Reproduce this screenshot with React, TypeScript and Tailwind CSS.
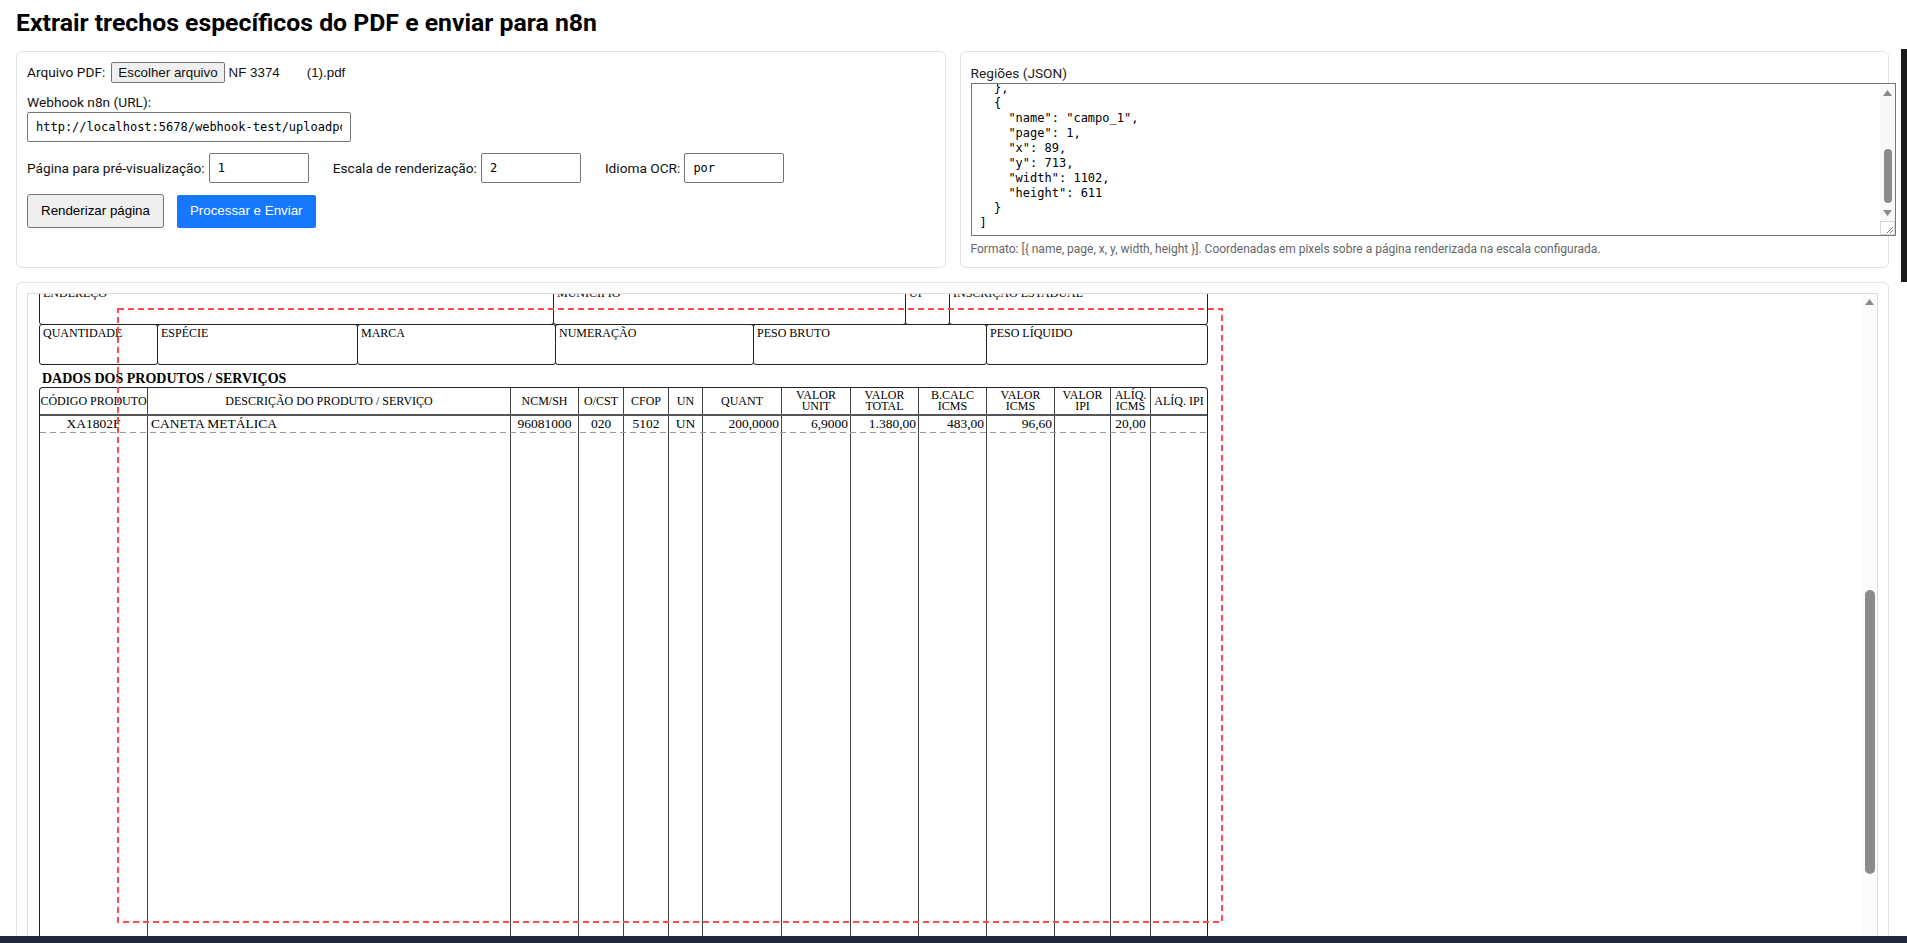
import React from 'react'

// only the part of the textarea that is scrolled into view
const jsonLines = [
  '  },',
  '  {',
  '    "name": "campo_1",',
  '    "page": 1,',
  '    "x": 89,',
  '    "y": 713,',
  '    "width": 1102,',
  '    "height": 611',
  '  }',
  ']',
]

// widths of the table columns, in px (without the outer borders)
const cols = [
  { w: 'w-[108px]', head: ['CÓDIGO PRODUTO'], value: 'XA1802F', align: 'justify-center' },
  { w: 'w-[363px]', head: ['DESCRIÇÃO DO PRODUTO / SERVIÇO'], value: 'CANETA METÁLICA', align: 'justify-start pl-[3px]' },
  { w: 'w-[68px]', head: ['NCM/SH'], value: '96081000', align: 'justify-center' },
  { w: 'w-[45px]', head: ['O/CST'], value: '020', align: 'justify-center' },
  { w: 'w-[45px]', head: ['CFOP'], value: '5102', align: 'justify-center' },
  { w: 'w-[34px]', head: ['UN'], value: 'UN', align: 'justify-center' },
  { w: 'w-[79px]', head: ['QUANT'], value: '200,0000', align: 'justify-end pr-[2px]' },
  { w: 'w-[69px]', head: ['VALOR', 'UNIT'], value: '6,9000', align: 'justify-end pr-[2px]' },
  { w: 'w-[68px]', head: ['VALOR', 'TOTAL'], value: '1.380,00', align: 'justify-end pr-[2px]' },
  { w: 'w-[68px]', head: ['B.CALC', 'ICMS'], value: '483,00', align: 'justify-end pr-[2px]' },
  { w: 'w-[68px]', head: ['VALOR', 'ICMS'], value: '96,60', align: 'justify-end pr-[2px]' },
  { w: 'w-[56px]', head: ['VALOR', 'IPI'], value: '', align: 'justify-end pr-[2px]' },
  { w: 'w-[40px]', head: ['ALÍQ.', 'ICMS'], value: '20,00', align: 'justify-center' },
  { w: 'w-[56px]', head: ['ALÍQ. IPI'], value: '', align: 'justify-center' },
]

function Box({ label, w, first }: { label: string; w: string; first?: boolean }) {
  return (
    <div className={`${w} h-[41px] shrink-0 border border-[#222] rounded-[3px] pl-[3px] pt-px text-[12px] leading-[14px] whitespace-nowrap overflow-hidden ${first ? '' : '-ml-px'}`}>
      {label}
    </div>
  )
}

function UpArrow() {
  return (
    <svg width="9" height="6" viewBox="0 0 9 6">
      <polygon points="4.5,0 9,6 0,6" fill="#8a8a8a" />
    </svg>
  )
}

function DownArrow() {
  return (
    <svg width="9" height="6" viewBox="0 0 9 6">
      <polygon points="0,0 9,0 4.5,6" fill="#8a8a8a" />
    </svg>
  )
}

function PdfPreview() {
  return (
    <div className="relative h-[700px] overflow-hidden border border-[#dcdcdc] bg-white">
      <div className="-mt-[10px] ml-[11px] w-[1169px] text-black [font-family:'Liberation_Serif','Times_New_Roman',serif]">
        <div className="flex">
          <Box label="ENDEREÇO" w="w-[515px]" first />
          <Box label="MUNICÍPIO" w="w-[353px]" />
          <Box label="UF" w="w-[45px]" />
          <Box label="INSCRIÇÃO ESTADUAL" w="w-[259px]" />
        </div>
        <div className="flex -mt-px">
          <Box label="QUANTIDADE" w="w-[119px]" first />
          <Box label="ESPÉCIE" w="w-[201px]" />
          <Box label="MARCA" w="w-[199px]" />
          <Box label="NUMERAÇÃO" w="w-[199px]" />
          <Box label="PESO BRUTO" w="w-[234px]" />
          <Box label="PESO LÍQUIDO" w="w-[222px]" />
        </div>
        <div className="mt-[6px] h-[16px] pl-[3px] text-[14px] leading-[16px] font-bold whitespace-nowrap">
          DADOS DOS PRODUTOS / SERVIÇOS
        </div>
        <div className="border-x border-t border-[#222] rounded-t-[4px]">
          <div className="flex h-[28px] border-b-2 border-[#555]">
            {cols.map((c, i) => (
              <div
                key={i}
                className={`${c.w} shrink-0 flex flex-col items-center justify-center text-center text-[12px] leading-[11px] whitespace-nowrap ${i < cols.length - 1 ? 'border-r border-[#444]' : ''}`}
              >
                {c.head.map((h) => (
                  <span key={h}>{h}</span>
                ))}
              </div>
            ))}
          </div>
          <div className="relative flex h-[560px]">
            {cols.map((c, i) => (
              <div key={i} className={`${c.w} shrink-0 ${i < cols.length - 1 ? 'border-r border-[#444]' : ''}`}>
                <div className={`flex h-[16px] items-center text-[13.5px] leading-[16px] whitespace-nowrap ${c.align}`}>
                  {c.value}
                </div>
              </div>
            ))}
            <div className="absolute left-0 right-0 top-[15.5px] h-[1.5px] bg-[repeating-linear-gradient(90deg,#9a9a9a_0_6px,transparent_6px_10px)]" />
          </div>
        </div>
      </div>

      {/* selected region */}
      <svg className="absolute left-[89px] top-[13.5px]" width="1106" height="615">
        <rect x="1" y="1" width="1104" height="613" fill="none" stroke="#ff4a4f" strokeWidth="2" strokeDasharray="6 4" />
      </svg>

      {/* scrollbar */}
      <div className="absolute right-0 top-0 bottom-0 w-[15px] bg-[#fbfbfb]">
        <div className="absolute left-[3px] top-[5px]">
          <UpArrow />
        </div>
        <div className="absolute left-[2.5px] top-[296px] h-[284px] w-[10px] rounded-full bg-[#8b8b8b]" />
      </div>
    </div>
  )
}

const inputCls =
  'w-[100px] h-[30px] border border-[#767676] rounded-[2px] px-[8px] text-[12px] text-black outline-none [font-family:"DejaVu_Sans_Mono",monospace]'

export default function App() {
  return (
    <div className="h-[943px] w-full overflow-hidden bg-white flex flex-col text-[#111] [font-family:Roboto,'Segoe_UI',sans-serif]">
      <div className="relative flex-1 min-h-0 overflow-hidden pl-4 pr-[18px]">
        <h1 className="pt-[7px] mb-[12px] text-[24.8px] leading-[32px] font-bold text-black">
          Extrair trechos específicos do PDF e enviar para n8n
        </h1>

        <div className="grid grid-cols-2 gap-[14px]">
          <section className="border border-[#e2e2e2] rounded-md p-[10px] text-[13.7px]">
            <div className="flex h-[21px] items-center">
              <span>Arquivo PDF:</span>
              <span className="ml-[6px] flex h-[21px] items-center border border-[#767676] bg-[#efefef] rounded-[2px] px-[6px] text-[13.33px] [font-family:'Liberation_Sans',Arial,sans-serif]">
                Escolher arquivo
              </span>
              <span className="ml-[4px] text-[13.33px] [font-family:'Liberation_Sans',Arial,sans-serif]">NF 3374</span>
              <span className="ml-[27px] text-[13.33px] [font-family:'Liberation_Sans',Arial,sans-serif]">(1).pdf</span>
            </div>

            <label className="block mt-[10px] leading-[19px]">Webhook n8n (URL):</label>
            <input
              type="text"
              defaultValue="http://localhost:5678/webhook-test/uploadpdf"
              className="block w-[324px] h-[30px] border border-[#767676] rounded-[2px] px-[8px] text-[12px] text-black outline-none [font-family:'DejaVu_Sans_Mono',monospace]"
            />

            <div className="mt-[11px] flex items-center gap-[24px]">
              <div className="flex items-center gap-[4px]">
                <span>Página para pré-visualização:</span>
                <input type="text" defaultValue="1" className={inputCls} />
              </div>
              <div className="flex items-center gap-[4px]">
                <span>Escala de renderização:</span>
                <input type="text" defaultValue="2" className={inputCls} />
              </div>
              <div className="flex items-center gap-[4px]">
                <span>Idioma OCR:</span>
                <input type="text" defaultValue="por" className={inputCls} />
              </div>
            </div>

            <div className="mt-[11px] flex items-center gap-[13px]">
              <button className="h-[34px] px-[13px] border border-[#767676] bg-[#efefef] rounded-[3px] text-[13.33px] text-black [font-family:'Liberation_Sans',Arial,sans-serif]">
                Renderizar página
              </button>
              <button className="h-[33px] px-[13px] bg-[#1677ff] rounded-[2px] text-[13.33px] text-white [font-family:'Liberation_Sans',Arial,sans-serif]">
                Processar e Enviar
              </button>
            </div>
          </section>

          <section className="border border-[#e2e2e2] rounded-md p-[10px] text-[13.7px]">
            <label className="block pt-[2px] leading-[19px] text-[#222]">Regiões (JSON)</label>
            <div className="relative w-[calc(100%+18px)] h-[153px] border border-[#767676] overflow-hidden">
              <div className="flex h-full flex-col justify-end pl-[8px] pb-[4px] text-[12px] leading-[15px] text-black whitespace-pre [font-family:'DejaVu_Sans_Mono',monospace]">
                {jsonLines.map((l, i) => (
                  <div key={i}>{l}</div>
                ))}
              </div>
              <div className="absolute right-0 top-0 bottom-0 w-[15px] bg-[#f8f8f8]">
                <div className="absolute left-[3px] top-[6px]">
                  <UpArrow />
                </div>
                <div className="absolute left-[3.5px] top-[65px] h-[54px] w-[8px] rounded-full bg-[#8b8b8b]" />
                <div className="absolute left-[3px] top-[126px]">
                  <DownArrow />
                </div>
                <svg className="absolute left-0 bottom-0" width="15" height="14" viewBox="0 0 15 14">
                  <rect x="0.5" y="0.5" width="14" height="13" fill="#fff" stroke="#d8d8d8" />
                  <line x1="13" y1="6" x2="7" y2="12" stroke="#777" strokeWidth="1" />
                  <line x1="13" y1="9" x2="10" y2="12" stroke="#777" strokeWidth="1" />
                </svg>
              </div>
            </div>
            <div className="mt-[5px] text-[12px] leading-[16px] text-[#666] whitespace-nowrap">
              Formato: [{'{'} name, page, x, y, width, height {'}'}]. Coordenadas em pixels sobre a página renderizada na escala configurada.
            </div>
          </section>
        </div>

        <section className="mt-[14px] h-[740px] border border-[#e2e2e2] rounded-md p-[10px]">
          <PdfPreview />
        </section>

        {/* edge of a neighbouring window */}
        <div className="absolute right-0 top-[49px] h-[233px] w-[6px] bg-[#1b1b1b]" />
      </div>
      <div className="h-[7px] shrink-0 bg-[#1f2838]" />
    </div>
  )
}
